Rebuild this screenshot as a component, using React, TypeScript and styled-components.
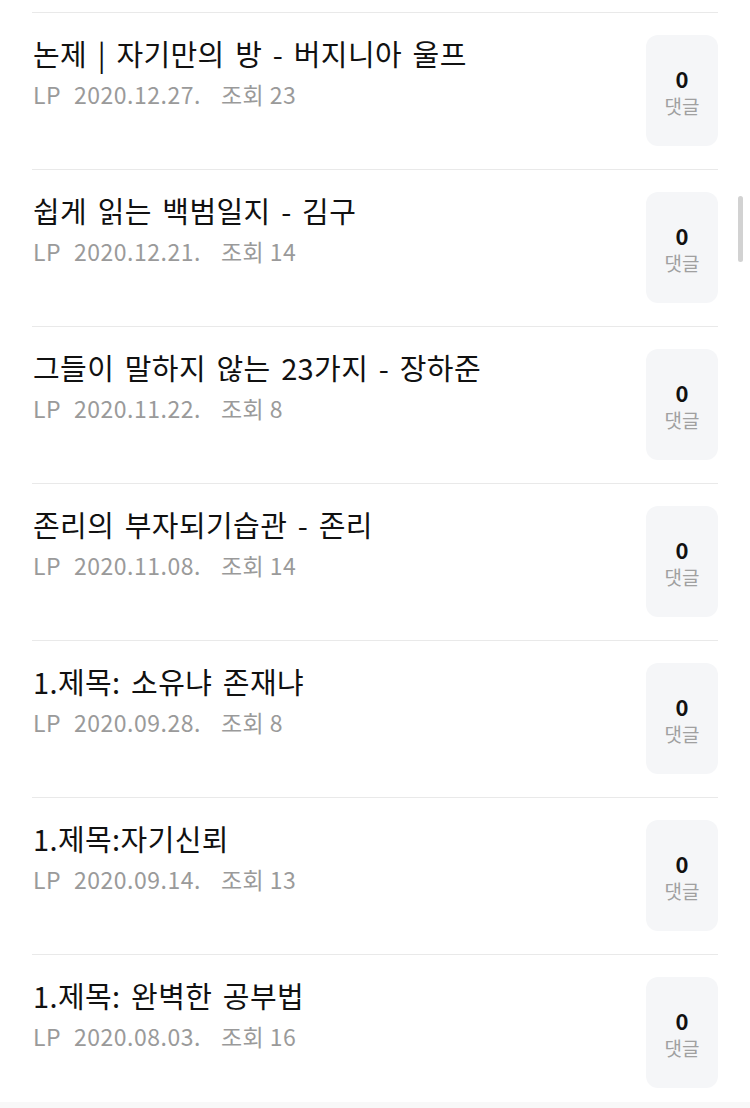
import styled, { createGlobalStyle } from 'styled-components';

interface Post {
  title: string;
  date: string;
  views: number;
  comments: number;
}

const posts: Post[] = [
  { title: '논제 | 자기만의 방 - 버지니아 울프', date: '2020.12.27.', views: 23, comments: 0 },
  { title: '쉽게 읽는 백범일지 - 김구', date: '2020.12.21.', views: 14, comments: 0 },
  { title: '그들이 말하지 않는 23가지 - 장하준', date: '2020.11.22.', views: 8, comments: 0 },
  { title: '존리의 부자되기습관 - 존리', date: '2020.11.08.', views: 14, comments: 0 },
  { title: '1.제목: 소유냐 존재냐', date: '2020.09.28.', views: 8, comments: 0 },
  { title: '1.제목:자기신뢰', date: '2020.09.14.', views: 13, comments: 0 },
  { title: '1.제목: 완벽한 공부법', date: '2020.08.03.', views: 16, comments: 0 },
];

const GlobalStyle = createGlobalStyle`
  html, body {
    margin: 0;
    padding: 0;
    background: #fff;
    font-family: "Noto Sans CJK KR", "Noto Sans", sans-serif;
    overflow: hidden;
  }
`;

const Page = styled.div`
  position: relative;
  width: 750px;
  height: 1108px;
  overflow: hidden;
  background: #fff;
`;

const List = styled.ul`
  list-style: none;
  margin: 0;
  padding: 12px 32px 0;
`;

const Row = styled.li`
  display: flex;
  align-items: center;
  justify-content: space-between;
  gap: 20px;
  border-top: 1px solid #e9e9e9;
  padding: 22px 0 23px;
`;

const Info = styled.div`
  display: flex;
  flex-direction: column;
  gap: 8px;
  min-width: 0;
  align-self: flex-start;
`;

const Title = styled.div`
  font-size: 29px;
  line-height: 36px;
  color: #111;
  letter-spacing: 0.4px;
  word-spacing: 3.6px;
  white-space: nowrap;
  margin-left: 1px;
`;

const Meta = styled.div`
  display: flex;
  font-size: 23px;
  line-height: 30px;
  color: #9a9a9a;
  letter-spacing: 0.5px;
  margin-left: 1px;
`;

const MetaItem = styled.span<{ $gap?: number }>`
  margin-right: ${({ $gap }) => $gap ?? 0}px;
`;

const CommentBox = styled.div`
  flex: none;
  width: 72px;
  height: 111px;
  border-radius: 12px;
  background: #f5f6f8;
  display: flex;
  flex-direction: column;
  align-items: center;
  justify-content: center;
  gap: 3px;
  padding-top: 2px;
  box-sizing: border-box;
`;

const Count = styled.div`
  font-size: 22px;
  line-height: 26px;
  font-weight: 700;
  color: #111;
`;

const CountLabel = styled.div`
  font-size: 19px;
  line-height: 24px;
  color: #a0a0a0;
`;

const Footer = styled.div`
  height: 40px;
  background: #f8f8f8;
  margin-top: -9px;
`;

const ScrollThumb = styled.div`
  position: absolute;
  top: 196px;
  right: 7px;
  width: 5px;
  height: 66px;
  border-radius: 3px;
  background: #d2d2d2;
`;

const App = (): React.ReactElement => (
  <Page>
    <GlobalStyle />
    <List>
      {posts.map((p) => (
        <Row key={p.date}>
          <Info>
            <Title>{p.title}</Title>
            <Meta>
              <MetaItem $gap={13}>LP</MetaItem>
              <MetaItem $gap={20}>{p.date}</MetaItem>
              <MetaItem>조회 {p.views}</MetaItem>
            </Meta>
          </Info>
          <CommentBox>
            <Count>{p.comments}</Count>
            <CountLabel>댓글</CountLabel>
          </CommentBox>
        </Row>
      ))}
    </List>
    <Footer />
    <ScrollThumb />
  </Page>
);

export default App;
